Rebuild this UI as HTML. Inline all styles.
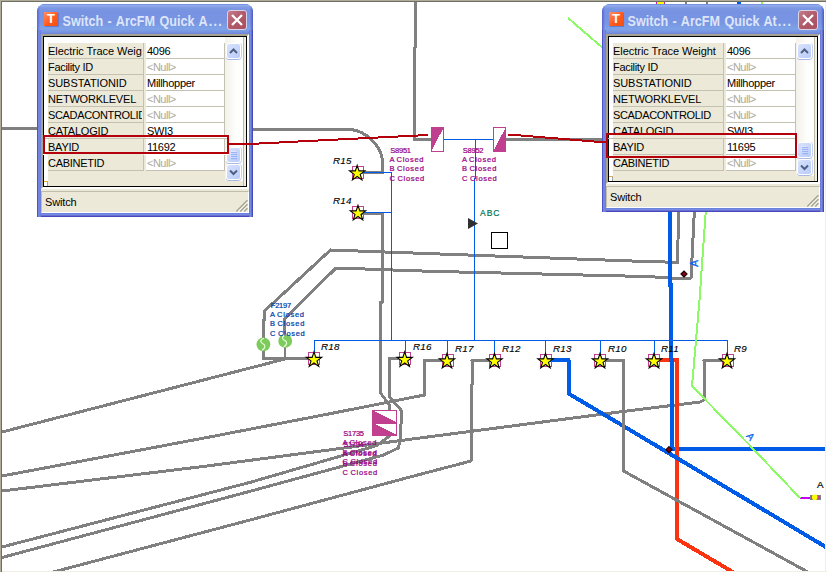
<!DOCTYPE html>
<html lang="en"><head><meta charset="utf-8"><title>Switch - ArcFM Quick Attribute Viewer</title>
<style>
*{box-sizing:border-box;margin:0;padding:0}
html,body{width:827px;height:573px;overflow:hidden;background:#fff}
body{position:relative;font-family:"Liberation Sans",Arial,sans-serif;font-size:11px;color:#000}
#frame{position:absolute;left:0;top:0;width:827px;height:573px}
#bt{position:absolute;left:0;top:0;width:826px;height:2px;background:linear-gradient(#b0ac9a 0,#b0ac9a 1px,#716f64 1px,#716f64 2px)}
#bl{position:absolute;left:0;top:0;width:2px;height:572px;background:linear-gradient(90deg,#b0ac9a 0,#b0ac9a 1px,#716f64 1px,#716f64 2px)}
#bc{position:absolute;left:0;top:0;width:826px;height:1px;background:#b0ac9a}
#br{position:absolute;left:825px;top:2px;width:2px;height:571px;background:linear-gradient(90deg,#f1efe2 0,#f1efe2 1px,#fff 1px)}
#bb{position:absolute;left:2px;top:571px;width:825px;height:2px;background:linear-gradient(#f1efe2 0,#f1efe2 1px,#fff 1px)}
svg#map{position:absolute;left:0;top:0}
.dlg{position:absolute;background:#748ce0;border-radius:8px 8px 0 0;overflow:hidden}
.dlg:after{content:"";position:absolute;left:0;right:0;bottom:0;height:4px;background:linear-gradient(#6a82de 0,#6a82de 1px,#748ce2 1px,#748ce2 2px,#6a70ce 2px,#6a70ce 3px,#4848be 3px);pointer-events:none}
.dlg:before{content:"";position:absolute;left:0;right:0;top:26px;bottom:0;background:linear-gradient(90deg,#4c54c8 0,#4c54c8 1px,#7684de 1px,#7684de 3px,#6a82de 3px,#6a82de 4px,rgba(0,0,0,0) 4px,rgba(0,0,0,0) calc(100% - 4px),#6a7cdc calc(100% - 4px),#6a7cdc calc(100% - 3px),#748ee0 calc(100% - 3px),#748ee0 calc(100% - 2px),#6a70cc calc(100% - 2px),#6a70cc calc(100% - 1px),#4848be calc(100% - 1px));pointer-events:none;z-index:1}
.tb{position:absolute;left:0;top:0;right:0;height:30px;background:linear-gradient(#6a82da 0,#90acea 1.5px,#7c98e4 4px,#7692e0 8px,#7894e2 18px,#7ea2e8 25px,#7894e2 28px,#6e84dc 30px)}
.tb:before{content:"";position:absolute;left:0;top:0;bottom:0;width:3px;background:linear-gradient(90deg,#5a62d0,rgba(106,116,216,0))}
.tb:after{content:"";position:absolute;right:0;top:0;bottom:0;width:3px;background:linear-gradient(270deg,#5058c8,rgba(106,116,216,0))}
.ico{position:absolute;left:7px;top:8px;width:14px;height:14px;background:linear-gradient(135deg,#ff8f60,#ff5a1e 55%,#f4500f);box-shadow:1px 1px 0 rgba(80,90,180,.5)}
.ico span{position:absolute;left:0;top:0;width:14px;text-align:center;font-weight:bold;font-size:13px;line-height:14px;color:#fff}
.tt{position:absolute;left:25.5px;top:8.5px;height:18px;line-height:18px;font-weight:bold;font-size:12.6px;color:#dde5fa;white-space:nowrap;word-spacing:1px;transform:scaleY(1.09);transform-origin:0 14px;-webkit-font-smoothing:antialiased}
.tt b{letter-spacing:1.3px;margin-left:1px}
.cls{position:absolute;right:6px;top:6px;width:20px;height:20px;border:1px solid #dcd4e6;border-radius:3px;background:linear-gradient(135deg,#c57c8c,#b05a6a 50%,#a85060);overflow:hidden}
.cls svg{position:absolute;left:-1px;top:-1px}
.client{position:absolute;left:4px;right:4px;top:30px;bottom:4px;background:#ece9d8;z-index:2}
.pane{z-index:3;position:absolute;left:4px;right:4px;top:30px;border:2px solid;border-color:#a5a290 #fff #fff #a5a290;background:#fff;overflow:hidden}
.inner{position:absolute;left:0;top:0;right:0;bottom:0;border:1px solid #000;overflow:hidden;background:#ece9d8}
.inner:before{content:"";position:absolute;left:0;top:0;right:0;height:6px;background:#fff}
.inner:after{content:"";position:absolute;left:0;top:0;bottom:0;width:4px;background:#fff}
.rows{position:absolute;left:4px;right:21px;top:6px;bottom:0}
.row{position:absolute;left:0;right:0;height:16px;white-space:nowrap;overflow:hidden}
.nm{position:absolute;left:0;top:0;height:16px;background:#ece9d8;border-right:1px solid #c4c1b2;border-bottom:1px solid #c4c1b2;line-height:16px;padding-left:0;overflow:hidden}
.vl{position:absolute;top:0;right:0;height:16px;background:#fff;border-right:1px solid #c4c1b2;border-bottom:1px solid #c4c1b2;line-height:16px;padding-left:1px;overflow:hidden}
.vl{letter-spacing:-.28px}
.nm span{display:block;overflow:hidden;width:calc(100% - 1px)}
.nul{color:#aca899;letter-spacing:-.5px}
.sb{position:absolute;right:0;top:0;bottom:0;width:21px;background:linear-gradient(90deg,#f3f1ea,#fefefc 60%,#fff) no-repeat;background-size:100% calc(100% - 5px);border-right:2px solid #f0eee0;z-index:3}
.sb:after{content:"";position:absolute;right:0;top:0;bottom:0;width:1px;background:#bdbaaa}
.sbtn{position:absolute;left:1px;width:15px;height:16px;border:1px solid #fff;border-radius:3px;background:linear-gradient(135deg,#d9e3fd,#b9cbf8);box-shadow:0 1px 0 0 #a9b9e6,1px 0 0 0 #c6d3f4}
.sbtn svg{position:absolute;left:-1px;top:-1px}
.mark{position:absolute;left:0;bottom:0;width:4px;height:5px;border-top:1px solid #f0a830;background:#fff;z-index:6;border-right:1px solid #9aa}
.st{position:absolute;left:4px;right:4px;bottom:4px;height:22px;background:#ece9d8;border-top:1px solid #c0bdac;border-bottom:1px solid #fff;border-left:1px solid #c4c0ae;border-right:1px solid #fff;line-height:21px;padding-left:3px;font-size:11px;z-index:3}
.grip{position:absolute;right:0;bottom:0}
.hl{position:absolute;border:2px solid #b4000a;z-index:20}
#ov{position:absolute;left:0;top:0;z-index:25;pointer-events:none}
.hl u{position:absolute;left:-2px;right:-2px;bottom:-3px;height:1px;display:block}
.hl i{position:absolute;left:0;right:0;top:0;display:block;background:#ece9d8;border-bottom:1px solid #c4c1b2}
</style></head>
<body>
<div id="frame">
<svg id="map" width="827" height="573" viewBox="0 0 827 573" font-family="'Liberation Sans',Arial,sans-serif"><g shape-rendering="crispEdges"><polyline points="415,2 415,48 414,48 414,139.5 431,139.5" fill="none" stroke="#808080" stroke-width="3" stroke-linejoin="round" /><polyline points="2,128 40,128" fill="none" stroke="#808080" stroke-width="3" stroke-linejoin="round" /><path d="M250,129.5 L351,129.5 C366,131 381,146 382.5,160 L382.5,172 L358,172" fill="none" stroke="#808080" stroke-width="3"/><polyline points="358,213 382.5,213 382.5,302 380.5,302 380.5,393 389.5,405 390,411" fill="none" stroke="#808080" stroke-width="3" stroke-linejoin="round" /><polyline points="506,139.5 604,139.5" fill="none" stroke="#808080" stroke-width="3" stroke-linejoin="round" /><polyline points="678.5,208 678,240 677.5,262.5 660,261.8 640,261.3 330.5,250 265,310.5 264.5,320 263.3,320 263.3,358.5 285,358.5" fill="none" stroke="#808080" stroke-width="3" stroke-linejoin="round" /><polyline points="694.5,208 692.7,245 691,278 672,278 660,277.2 637,276.3 430,271.3 336,268 284.7,318.5 285,341 285,358.5 314,358.5" fill="none" stroke="#808080" stroke-width="3" stroke-linejoin="round" /><polyline points="285,359 2,432" fill="none" stroke="#808080" stroke-width="3" stroke-linejoin="round" /><polyline points="404,358.5 389.5,358.5 389.5,396.7 401.8,411 400,441 398.2,448 383.7,455 250,491.3 2,557.5" fill="none" stroke="#808080" stroke-width="3" stroke-linejoin="round" /><polyline points="391,435 377,445.5 250,482.4 2,547" fill="none" stroke="#808080" stroke-width="3" stroke-linejoin="round" /><polyline points="447,360.5 424.5,360.5 424.5,395 330,413.7 207,437.5 2,476" fill="none" stroke="#808080" stroke-width="3" stroke-linejoin="round" /><polyline points="494,360.5 472,360.5 472,385 471,385 471,461 410,477 250,520 42,575" fill="none" stroke="#808080" stroke-width="3" stroke-linejoin="round" /><polyline points="727,360.5 704,360.5 704,400 700,402 627,411 420,438 207,466 2,491" fill="none" stroke="#808080" stroke-width="3" stroke-linejoin="round" /></g><g shape-rendering="crispEdges"><polyline points="358,172.5 391.5,172.5 391.5,340.5" fill="none" stroke="#005ce6" stroke-width="1" stroke-linejoin="round" stroke-linejoin="miter"/><polyline points="358,212.5 391.5,212.5" fill="none" stroke="#005ce6" stroke-width="1" stroke-linejoin="round" stroke-linejoin="miter"/><polyline points="444,139.5 493,139.5" fill="none" stroke="#005ce6" stroke-width="1" stroke-linejoin="round" stroke-linejoin="miter"/><polyline points="475.5,139.5 475.5,178.5 474.5,178.5 474.5,340.5" fill="none" stroke="#005ce6" stroke-width="1" stroke-linejoin="round" stroke-linejoin="miter"/><polyline points="314.5,358 314.5,340.5 727.5,340.5 727.5,358" fill="none" stroke="#005ce6" stroke-width="1" stroke-linejoin="round" stroke-linejoin="miter"/><polyline points="405.5,340.5 405.5,358" fill="none" stroke="#005ce6" stroke-width="1" stroke-linejoin="round" stroke-linejoin="miter"/><polyline points="447.5,340.5 447.5,358" fill="none" stroke="#005ce6" stroke-width="1" stroke-linejoin="round" stroke-linejoin="miter"/><polyline points="494.5,340.5 494.5,358" fill="none" stroke="#005ce6" stroke-width="1" stroke-linejoin="round" stroke-linejoin="miter"/><polyline points="545.5,340.5 545.5,358" fill="none" stroke="#005ce6" stroke-width="1" stroke-linejoin="round" stroke-linejoin="miter"/><polyline points="600.5,340.5 600.5,358" fill="none" stroke="#005ce6" stroke-width="1" stroke-linejoin="round" stroke-linejoin="miter"/><polyline points="654.5,340.5 654.5,358" fill="none" stroke="#005ce6" stroke-width="1" stroke-linejoin="round" stroke-linejoin="miter"/></g><g shape-rendering="crispEdges"><polyline points="800,498 811,498" fill="none" stroke="#c800f0" stroke-width="2" stroke-linejoin="round" /><rect x="810.5" y="495.5" width="10" height="4" fill="#c83ca0" stroke="#828282" stroke-width="1"/><circle cx="814.7" cy="497.3" r="2.8" fill="#ffff00" shape-rendering="auto"/><polyline points="670,208 670,285 671,285 671,360 672,360 672,449 830,449" fill="none" stroke="#005ce6" stroke-width="4" stroke-linejoin="round" stroke-linejoin="miter"/><polyline points="654,359.5 677,359.5 677,539 737.8,575" fill="none" stroke="#fa3411" stroke-width="4" stroke-linejoin="round" stroke-linejoin="miter"/><polyline points="671,340 671,360 672,360 672,368" fill="none" stroke="#005ce6" stroke-width="4" stroke-linejoin="round" stroke-linejoin="miter"/><polyline points="545,359.5 568.5,359.5 568.5,393.5 627.5,428.5 830,549.5" fill="none" stroke="#005ce6" stroke-width="4" stroke-linejoin="round" stroke-linejoin="miter"/><polyline points="568,18 604,49" fill="none" stroke="#8cfa64" stroke-width="2" stroke-linejoin="round" /><polyline points="706,208 699.5,300 692,386 747.5,443 800,498" fill="none" stroke="#8cfa64" stroke-width="2" stroke-linejoin="round" /><polyline points="600,360.5 623.5,360.5 623.5,471 813.3,575" fill="none" stroke="#808080" stroke-width="3" stroke-linejoin="round" /></g><g shape-rendering="crispEdges"></g><g shape-rendering="crispEdges"><rect x="431.5" y="127.5" width="12" height="23.5" fill="#fff" stroke="#c0408f" stroke-width="1"/><polygon points="431,127 444,127 431,151.5" fill="#c0408f"/><rect x="493.5" y="127.5" width="12" height="23.5" fill="#fff" stroke="#c0408f" stroke-width="1"/><polygon points="506,127 506,151.5 493,151.5" fill="#c0408f"/><rect x="372.5" y="410.5" width="24" height="12" fill="#fff" stroke="#c0408f" stroke-width="1"/><polygon points="372,410 397,422.5 372,422.5" fill="#c0408f"/><rect x="372.5" y="423.0" width="24" height="12" fill="#fff" stroke="#c0408f" stroke-width="1"/><polygon points="372,422.5 397,435.0 372,435.0" fill="#c0408f"/></g><circle cx="263.4" cy="344.3" r="6.9" fill="#7ccb5c"/><path d="M263.9,338.3 c-4.5,1.5 -3.5,4 -1,5.5 c3,1.5 2.5,4.5 -1,6.5" fill="none" stroke="#eaffdc" stroke-width="1.2"/><circle cx="285.2" cy="340.9" r="6.9" fill="#7ccb5c"/><path d="M285.7,334.9 c-4.5,1.5 -3.5,4 -1,5.5 c3,1.5 2.5,4.5 -1,6.5" fill="none" stroke="#eaffdc" stroke-width="1.2"/><polygon points="468,218 478,223.5 468,229" fill="#303030"/><rect x="491.5" y="232.5" width="16" height="16" fill="#fff" stroke="#000" stroke-width="1" shape-rendering="crispEdges"/><polygon points="681,274 684,271 687,274 684,277" fill="#8c0010" stroke="#1e0000" stroke-width="1.2"/><polygon points="666,449.7 669,446.7 672,449.7 669,452.7" fill="#8c0010" stroke="#1e0000" stroke-width="1.2"/><rect x="352.5" y="166.5" width="11" height="12" fill="none" stroke="#c0408f" stroke-width="1" shape-rendering="crispEdges"/><polygon points="357.20,165.30 359.05,170.85 364.90,170.90 360.20,174.37 361.96,179.95 357.20,176.55 352.44,179.95 354.20,174.37 349.50,170.90 355.35,170.85" fill="#ffff00" stroke="#000" stroke-width="1.1" stroke-linejoin="miter"/><rect x="352.5" y="206.5" width="11" height="12" fill="none" stroke="#c0408f" stroke-width="1" shape-rendering="crispEdges"/><polygon points="358.00,205.30 359.85,210.85 365.70,210.90 361.00,214.37 362.76,219.95 358.00,216.55 353.24,219.95 355.00,214.37 350.30,210.90 356.15,210.85" fill="#ffff00" stroke="#000" stroke-width="1.1" stroke-linejoin="miter"/><rect x="308.5" y="352.5" width="11" height="12" fill="none" stroke="#c0408f" stroke-width="1" shape-rendering="crispEdges"/><polygon points="314.00,351.80 315.85,357.35 321.70,357.40 317.00,360.87 318.76,366.45 314.00,363.05 309.24,366.45 311.00,360.87 306.30,357.40 312.15,357.35" fill="#ffff00" stroke="#000" stroke-width="1.1" stroke-linejoin="miter"/><rect x="399.5" y="352.5" width="11" height="12" fill="none" stroke="#c0408f" stroke-width="1" shape-rendering="crispEdges"/><polygon points="404.70,351.80 406.55,357.35 412.40,357.40 407.70,360.87 409.46,366.45 404.70,363.05 399.94,366.45 401.70,360.87 397.00,357.40 402.85,357.35" fill="#ffff00" stroke="#000" stroke-width="1.1" stroke-linejoin="miter"/><rect x="442.5" y="354.5" width="11" height="12" fill="none" stroke="#c0408f" stroke-width="1" shape-rendering="crispEdges"/><polygon points="447.00,353.30 448.85,358.85 454.70,358.90 450.00,362.37 451.76,367.95 447.00,364.55 442.24,367.95 444.00,362.37 439.30,358.90 445.15,358.85" fill="#ffff00" stroke="#000" stroke-width="1.1" stroke-linejoin="miter"/><rect x="489.5" y="354.5" width="11" height="12" fill="none" stroke="#c0408f" stroke-width="1" shape-rendering="crispEdges"/><polygon points="494.50,353.30 496.35,358.85 502.20,358.90 497.50,362.37 499.26,367.95 494.50,364.55 489.74,367.95 491.50,362.37 486.80,358.90 492.65,358.85" fill="#ffff00" stroke="#000" stroke-width="1.1" stroke-linejoin="miter"/><rect x="540.5" y="354.5" width="11" height="12" fill="none" stroke="#c0408f" stroke-width="1" shape-rendering="crispEdges"/><polygon points="545.50,353.30 547.35,358.85 553.20,358.90 548.50,362.37 550.26,367.95 545.50,364.55 540.74,367.95 542.50,362.37 537.80,358.90 543.65,358.85" fill="#ffff00" stroke="#000" stroke-width="1.1" stroke-linejoin="miter"/><rect x="594.5" y="354.5" width="11" height="12" fill="none" stroke="#c0408f" stroke-width="1" shape-rendering="crispEdges"/><polygon points="600.00,353.30 601.85,358.85 607.70,358.90 603.00,362.37 604.76,367.95 600.00,364.55 595.24,367.95 597.00,362.37 592.30,358.90 598.15,358.85" fill="#ffff00" stroke="#000" stroke-width="1.1" stroke-linejoin="miter"/><rect x="648.5" y="354.5" width="11" height="12" fill="none" stroke="#c0408f" stroke-width="1" shape-rendering="crispEdges"/><polygon points="654.00,353.30 655.85,358.85 661.70,358.90 657.00,362.37 658.76,367.95 654.00,364.55 649.24,367.95 651.00,362.37 646.30,358.90 652.15,358.85" fill="#ffff00" stroke="#000" stroke-width="1.1" stroke-linejoin="miter"/><rect x="722.5" y="354.5" width="11" height="12" fill="none" stroke="#c0408f" stroke-width="1" shape-rendering="crispEdges"/><polygon points="727.00,353.30 728.85,358.85 734.70,358.90 730.00,362.37 731.76,367.95 727.00,364.55 722.24,367.95 724.00,362.37 719.30,358.90 725.15,358.85" fill="#ffff00" stroke="#000" stroke-width="1.1" stroke-linejoin="miter"/><text x="333" y="164" font-size="9.8" font-style="italic" letter-spacing="0.25" fill="#000" stroke="#000" stroke-width="0.12">R15</text><text x="333" y="204" font-size="9.8" font-style="italic" letter-spacing="0.25" fill="#000" stroke="#000" stroke-width="0.12">R14</text><text x="321" y="350" font-size="9.8" font-style="italic" letter-spacing="0.25" fill="#000" stroke="#000" stroke-width="0.12">R18</text><text x="413" y="350" font-size="9.8" font-style="italic" letter-spacing="0.25" fill="#000" stroke="#000" stroke-width="0.12">R16</text><text x="455" y="351.5" font-size="9.8" font-style="italic" letter-spacing="0.25" fill="#000" stroke="#000" stroke-width="0.12">R17</text><text x="502" y="351.5" font-size="9.8" font-style="italic" letter-spacing="0.25" fill="#000" stroke="#000" stroke-width="0.12">R12</text><text x="553" y="351.5" font-size="9.8" font-style="italic" letter-spacing="0.25" fill="#000" stroke="#000" stroke-width="0.12">R13</text><text x="608" y="351.5" font-size="9.8" font-style="italic" letter-spacing="0.25" fill="#000" stroke="#000" stroke-width="0.12">R10</text><text x="661" y="352" font-size="9.8" font-style="italic" letter-spacing="0.25" fill="#000" stroke="#000" stroke-width="0.12">R11</text><text x="734" y="352" font-size="9.8" font-style="italic" letter-spacing="0.25" fill="#000" stroke="#000" stroke-width="0.12">R9</text><text x="390.3" y="152.6" font-size="7.5" letter-spacing="-0.25" fill="#980084" stroke="#980084" stroke-width="0.22">S8951</text><text x="389.5" y="161.9" font-size="7.5" letter-spacing="0.7" word-spacing="-1" fill="#980084" stroke="#980084" stroke-width="0.22">A Closed</text><text x="389.5" y="171.2" font-size="7.5" letter-spacing="0.7" word-spacing="-1" fill="#980084" stroke="#980084" stroke-width="0.22">B Closed</text><text x="389.5" y="181.0" font-size="7.5" letter-spacing="0.7" word-spacing="-1" fill="#980084" stroke="#980084" stroke-width="0.22">C Closed</text><text x="462.8" y="152.6" font-size="7.5" letter-spacing="-0.25" fill="#980084" stroke="#980084" stroke-width="0.22">S8952</text><text x="462" y="161.9" font-size="7.5" letter-spacing="0.7" word-spacing="-1" fill="#980084" stroke="#980084" stroke-width="0.22">A Closed</text><text x="462" y="171.2" font-size="7.5" letter-spacing="0.7" word-spacing="-1" fill="#980084" stroke="#980084" stroke-width="0.22">B Closed</text><text x="462" y="181.0" font-size="7.5" letter-spacing="0.7" word-spacing="-1" fill="#980084" stroke="#980084" stroke-width="0.22">C Closed</text><text x="343.3" y="436.0" font-size="7.5" letter-spacing="-0.25" fill="#980084" stroke="#980084" stroke-width="0.22">S1735</text><text x="342.5" y="445.3" font-size="7.5" letter-spacing="0.7" word-spacing="-1" fill="#980084" stroke="#980084" stroke-width="0.22">A Closed</text><text x="342.5" y="454.6" font-size="7.5" letter-spacing="0.7" word-spacing="-1" fill="#980084" stroke="#980084" stroke-width="0.22">B Closed</text><text x="342.5" y="464.4" font-size="7.5" letter-spacing="0.7" word-spacing="-1" fill="#980084" stroke="#980084" stroke-width="0.22">C Closed</text><text x="343.3" y="447.0" font-size="7.5" letter-spacing="-0.25" fill="#980084" stroke="#980084" stroke-width="0.22">S1734</text><text x="342.5" y="456.3" font-size="7.5" letter-spacing="0.7" word-spacing="-1" fill="#980084" stroke="#980084" stroke-width="0.22">A Closed</text><text x="342.5" y="465.6" font-size="7.5" letter-spacing="0.7" word-spacing="-1" fill="#980084" stroke="#980084" stroke-width="0.22">B Closed</text><text x="342.5" y="475.4" font-size="7.5" letter-spacing="0.7" word-spacing="-1" fill="#980084" stroke="#980084" stroke-width="0.22">C Closed</text><text x="270.8" y="307.7" font-size="7.5" letter-spacing="-0.25" fill="#0040a8" stroke="#0040a8" stroke-width="0.22">F2197</text><text x="270" y="316.8" font-size="7.5" letter-spacing="0.7" word-spacing="-1" fill="#0040a8" stroke="#0040a8" stroke-width="0.22">A Closed</text><text x="270" y="325.9" font-size="7.5" letter-spacing="0.7" word-spacing="-1" fill="#0040a8" stroke="#0040a8" stroke-width="0.22">B Closed</text><text x="270" y="335.5" font-size="7.5" letter-spacing="0.7" word-spacing="-1" fill="#0040a8" stroke="#0040a8" stroke-width="0.22">C Closed</text><text x="480" y="215.5" font-size="8.5" letter-spacing="1" fill="#00734c" stroke="#00734c" stroke-width="0.2">ABC</text><text x="817" y="488" font-size="9.8" fill="#000" stroke="#000" stroke-width="0.2">A</text><text x="0" y="0" font-size="10" fill="#0a64f0" stroke="#0a64f0" stroke-width="0.3" text-anchor="middle" transform="translate(698,263.5) rotate(-90)">A</text><text x="0" y="3.5" font-size="10" fill="#0a64f0" stroke="#0a64f0" stroke-width="0.3" text-anchor="middle" transform="translate(750.5,436.5) rotate(50)">A</text><rect x="656" y="2" width="9" height="2" fill="#c81ea0"/><rect x="657" y="2" width="7" height="2" fill="#ffff00"/><rect x="685" y="2" width="2" height="2" fill="#808080"/><rect x="706" y="2" width="2" height="2" fill="#808080"/><rect x="737" y="2" width="4" height="2" fill="#005ce6"/><rect x="761" y="2" width="2" height="2" fill="#8cf55a"/></svg>
<div id="bt"></div><div id="bl"></div><div id="bc"></div><div id="br"></div><div id="bb"></div>

<div class="dlg" id="d1" style="left:37px;top:4px;width:216px;height:213px">
  <div class="tb"><div class="ico"><span>T</span></div><div class="tt" style="letter-spacing:0px">Switch - ArcFM Quick A<b>...</b></div><div class="cls"><svg width="20" height="20" viewBox="0 0 20 20"><path d="M5 5 L15 15 M15 5 L5 15" stroke="#fff" stroke-width="2.3" stroke-linecap="butt" fill="none"/></svg></div></div>
  <div class="client"></div>
  <div class="pane" style="height:155px">
    <div class="inner">
    <div class="rows">
<div class="row" style="top:0px"><div class="nm" style="width:96px;letter-spacing:-0.04px"><span>Electric Trace Weight</span></div><div class="vl" style="left:98px"><span>4096</span></div></div>
<div class="row" style="top:16px"><div class="nm" style="width:96px;letter-spacing:-0.3px"><span>Facility ID</span></div><div class="vl" style="left:98px"><span class="nul">&lt;Null&gt;</span></div></div>
<div class="row" style="top:32px"><div class="nm" style="width:96px;letter-spacing:-0.08px"><span>SUBSTATIONID</span></div><div class="vl" style="left:98px"><span>Millhopper</span></div></div>
<div class="row" style="top:48px"><div class="nm" style="width:96px;letter-spacing:-0.2px"><span>NETWORKLEVEL</span></div><div class="vl" style="left:98px"><span class="nul">&lt;Null&gt;</span></div></div>
<div class="row" style="top:64px"><div class="nm" style="width:96px;letter-spacing:-0.35px"><span>SCADACONTROLID</span></div><div class="vl" style="left:98px"><span class="nul">&lt;Null&gt;</span></div></div>
<div class="row" style="top:80px"><div class="nm" style="width:96px;letter-spacing:-0.2px"><span>CATALOGID</span></div><div class="vl" style="left:98px"><span>SWI3</span></div></div>
<div class="row" style="top:96px"><div class="nm" style="width:96px;letter-spacing:-0.24px"><span>BAYID</span></div><div class="vl" style="left:98px"><span>11692</span></div></div>
<div class="row" style="top:112px"><div class="nm" style="width:96px;letter-spacing:-0.28px"><span>CABINETID</span></div><div class="vl" style="left:98px"><span class="nul">&lt;Null&gt;</span></div></div>
    </div>
    <div class="sb">
      <div class="sbtn" style="top:6px"><svg width="15" height="15" viewBox="0 0 15 15"><path d="M4 10 L7.5 6.5 L11 10" stroke="#4d6185" stroke-width="2" fill="none"/></svg></div>
      <div class="sbtn" style="top:110px"><svg width="15" height="15" viewBox="0 0 15 15"><path d="M4.5 5h6M4.5 7h6M4.5 9h6M4.5 11h6" stroke="#eef3ff" stroke-width="1" fill="none"/><path d="M5 5.7h6M5 7.7h6M5 9.7h6M5 11.7h6" stroke="#8aa8f4" stroke-width="1" fill="none"/></svg></div>
      <div class="sbtn" style="top:127px"><svg width="15" height="15" viewBox="0 0 15 15"><path d="M4 6.5 L7.5 10 L11 6.5" stroke="#4d6185" stroke-width="2" fill="none"/></svg></div>
    </div>
    <div class="mark"></div>
    </div>
  </div>
  <div class="st"><span style="letter-spacing:-.15px">Switch</span><svg class="grip" width="13" height="13" viewBox="0 0 13 13"><path d="M12.5 2.5 L2.5 12.5 M12.5 6.5 L6.5 12.5 M12.5 10.5 L10.5 12.5" stroke="#fff" stroke-width="1.2"/><path d="M12.5 1.3 L1.3 12.5 M12.5 5.3 L5.3 12.5 M12.5 9.3 L9.3 12.5" stroke="#a6a391" stroke-width="1.5"/></svg></div>
</div>

<div class="dlg" id="d2" style="left:602px;top:4px;width:222px;height:208px">
  <div class="tb"><div class="ico"><span>T</span></div><div class="tt" style="letter-spacing:0px">Switch - ArcFM Quick At<b>...</b></div><div class="cls"><svg width="20" height="20" viewBox="0 0 20 20"><path d="M5 5 L15 15 M15 5 L5 15" stroke="#fff" stroke-width="2.3" stroke-linecap="butt" fill="none"/></svg></div></div>
  <div class="client"></div>
  <div class="pane" style="height:150px">
    <div class="inner">
    <div class="rows">
<div class="row" style="top:0px"><div class="nm" style="width:111px;letter-spacing:-0.04px"><span>Electric Trace Weight</span></div><div class="vl" style="left:113px"><span>4096</span></div></div>
<div class="row" style="top:16px"><div class="nm" style="width:111px;letter-spacing:-0.3px"><span>Facility ID</span></div><div class="vl" style="left:113px"><span class="nul">&lt;Null&gt;</span></div></div>
<div class="row" style="top:32px"><div class="nm" style="width:111px;letter-spacing:-0.08px"><span>SUBSTATIONID</span></div><div class="vl" style="left:113px"><span>Millhopper</span></div></div>
<div class="row" style="top:48px"><div class="nm" style="width:111px;letter-spacing:-0.2px"><span>NETWORKLEVEL</span></div><div class="vl" style="left:113px"><span class="nul">&lt;Null&gt;</span></div></div>
<div class="row" style="top:64px"><div class="nm" style="width:111px;letter-spacing:-0.35px"><span>SCADACONTROLID</span></div><div class="vl" style="left:113px"><span class="nul">&lt;Null&gt;</span></div></div>
<div class="row" style="top:80px"><div class="nm" style="width:111px;letter-spacing:-0.2px"><span>CATALOGID</span></div><div class="vl" style="left:113px"><span>SWI3</span></div></div>
<div class="row" style="top:96px"><div class="nm" style="width:111px;letter-spacing:-0.24px"><span>BAYID</span></div><div class="vl" style="left:113px"><span>11695</span></div></div>
<div class="row" style="top:112px"><div class="nm" style="width:111px;letter-spacing:-0.28px"><span>CABINETID</span></div><div class="vl" style="left:113px"><span class="nul">&lt;Null&gt;</span></div></div>
    </div>
    <div class="sb">
      <div class="sbtn" style="top:6px"><svg width="15" height="15" viewBox="0 0 15 15"><path d="M4 10 L7.5 6.5 L11 10" stroke="#4d6185" stroke-width="2" fill="none"/></svg></div>
      <div class="sbtn" style="top:105px"><svg width="15" height="15" viewBox="0 0 15 15"><path d="M4.5 5h6M4.5 7h6M4.5 9h6M4.5 11h6" stroke="#eef3ff" stroke-width="1" fill="none"/><path d="M5 5.7h6M5 7.7h6M5 9.7h6M5 11.7h6" stroke="#8aa8f4" stroke-width="1" fill="none"/></svg></div>
      <div class="sbtn" style="top:122px"><svg width="15" height="15" viewBox="0 0 15 15"><path d="M4 6.5 L7.5 10 L11 6.5" stroke="#4d6185" stroke-width="2" fill="none"/></svg></div>
    </div>
    <div class="mark"></div>
    </div>
  </div>
  <div class="st"><span style="letter-spacing:-.15px">Switch</span><svg class="grip" width="13" height="13" viewBox="0 0 13 13"><path d="M12.5 2.5 L2.5 12.5 M12.5 6.5 L6.5 12.5 M12.5 10.5 L10.5 12.5" stroke="#fff" stroke-width="1.2"/><path d="M12.5 1.3 L1.3 12.5 M12.5 5.3 L5.3 12.5 M12.5 9.3 L9.3 12.5" stroke="#a6a391" stroke-width="1.5"/></svg></div>
</div>
<div class="hl" style="left:43px;top:135px;width:186px;height:19px"><i style="height:2px;background:linear-gradient(90deg,#fff 0,#fff 3px,#ece9d8 3px,#ece9d8 101px,#fff 101px)"></i><u style="background:linear-gradient(90deg,#fff 0,#fff 3px,#ece9d8 3px,#ece9d8 101px,#fff 101px)"></u></div>
<div class="hl" style="left:606px;top:133px;width:191px;height:25px"><i style="height:4px;background:linear-gradient(90deg,#000 0,#000 1px,#fff 1px,#fff 5px,#ece9d8 5px,#ece9d8 118px,#fff 118px)"></i></div>
<svg id="ov" width="827" height="573" viewBox="0 0 827 573" shape-rendering="crispEdges"><polyline points="229,144 249,144 428,135" fill="none" stroke="#b4000a" stroke-width="2"/><polyline points="507.5,135 515,135 606,142.5" fill="none" stroke="#b4000a" stroke-width="2"/></svg>
</div>
</body></html>
